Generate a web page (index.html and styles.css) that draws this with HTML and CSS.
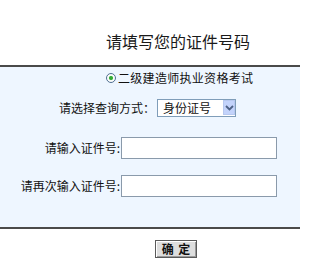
FILE: index.html
```html
<!DOCTYPE html>
<html lang="zh-CN">
<head>
<meta charset="utf-8">
<title>请填写您的证件号码</title>
<link rel="stylesheet" href="styles.css">
</head>
<body>
<div class="header">
  <h1 class="title">请填写您的证件号码</h1>
</div>
<form class="panel">
  <label class="row row-radio">
    <input class="radio" type="radio" name="exam" checked>
    <span class="radio-text">二级建造师执业资格考试</span>
  </label>
  <div class="row row-select">
    <span class="label">请选择查询方式：</span>
    <span class="select-wrap">
      <select class="select">
        <option>身份证号</option>
      </select>
      <span class="select-arrow">
        <svg width="9" height="6" viewBox="0 0 9 6"><path d="M1 1 L4.5 4.5 L8 1" fill="none" stroke="#4d6185" stroke-width="1.8"/></svg>
      </span>
    </span>
  </div>
  <div class="fields">
    <span class="field-label">请输入证件号:</span>
    <input class="text-input" type="text">
    <span class="field-label">请再次输入证件号:</span>
    <input class="text-input" type="text">
  </div>
</form>
<div class="actions">
  <button class="btn" type="button">确&nbsp;定</button>
</div>
</body>
</html>
```
FILE: styles.css
```css
html, body {
  margin: 0;
  padding: 0;
  background: #ffffff;
}
body {
  font-family: "Noto Sans CJK SC", "Liberation Sans", sans-serif;
  font-size: 12px;
  color: #111;
  width: 300px;
}
.header {
  height: 65px;
  box-sizing: border-box;
  padding: 33px 0 0 106px;
}
.title {
  margin: 0;
  font-size: 16px;
  font-weight: normal;
  line-height: 16px;
  color: #1a1a1a;
}
.panel {
  margin: 0;
  background: #eef6ff;
  border-top: 2px solid #4a4a4a;
  border-bottom: 2px solid #4a4a4a;
  padding: 5px 0 30px;
}
.row {
  display: flex;
  align-items: center;
}
.row-radio {
  height: 11px;
  padding-left: 106px;
  gap: 2px;
}
.radio {
  appearance: none;
  -webkit-appearance: none;
  margin: 0;
  width: 10px;
  height: 10px;
  border-radius: 50%;
  border: 1px solid #4f6f92;
  box-sizing: border-box;
  background: radial-gradient(circle, #2f9e2f 0, #3fb43f 1.6px, #ffffff 2.6px, #f2f2f2 100%);
}
.radio-text {
  line-height: 12px;
  letter-spacing: 0.3px;
}
.row-select {
  margin-top: 16px;
  height: 18px;
  padding-left: 59px;
  gap: 2px;
}
.label {
  line-height: 12px;
}
.select-wrap {
  position: relative;
  display: inline-block;
  height: 18px;
}
.select {
  appearance: none;
  -webkit-appearance: none;
  margin: 0;
  width: 79px;
  height: 18px;
  box-sizing: border-box;
  border: 1px solid #7f9db9;
  border-radius: 0;
  background: #ffffff;
  padding: 0 0 0 5px;
  font-family: inherit;
  font-size: 12px;
  line-height: 16px;
  color: #111;
}
.select-arrow {
  position: absolute;
  right: 1px;
  top: 1px;
  width: 12px;
  height: 15px;
  box-sizing: border-box;
  background: #c3d3fb;
  border: 1px solid #b7c8ef;
  display: flex;
  align-items: center;
  justify-content: center;
  pointer-events: none;
}
.fields {
  margin-top: 20px;
  display: grid;
  grid-template-columns: 120px 156px;
  column-gap: 1px;
  row-gap: 16px;
  align-items: center;
}
.field-label {
  text-align: right;
  line-height: 12px;
}
.text-input {
  margin: 0;
  width: 156px;
  height: 22px;
  box-sizing: border-box;
  border: 1px solid #8a9aab;
  background: #ffffff;
  padding: 0 3px;
  font-family: inherit;
  font-size: 12px;
}
.actions {
  padding: 11px 0 0 155px;
}
.btn {
  margin: 0;
  width: 42px;
  height: 18px;
  box-sizing: border-box;
  border: 1px solid #5a5a5a;
  border-radius: 0;
  background: #dedede;
  box-shadow: inset 1px 1px 0 #ffffff, inset -1px -1px 0 #9a9a9a;
  padding: 0;
  font-family: inherit;
  font-size: 12px;
  font-weight: bold;
  line-height: 14px;
  letter-spacing: 1px;
  text-indent: 1px;
  color: #111;
}
```
